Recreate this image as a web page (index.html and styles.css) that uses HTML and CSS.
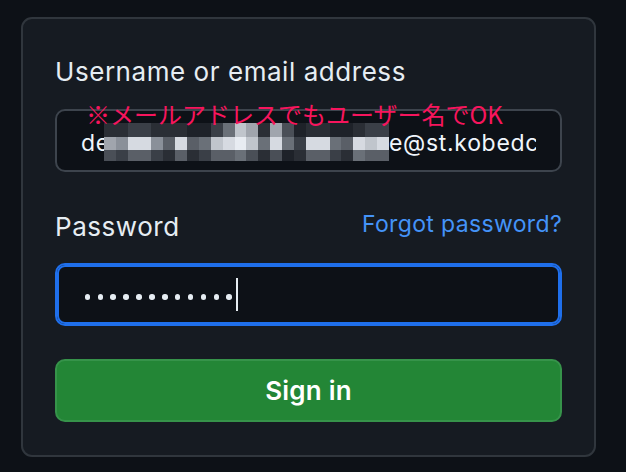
FILE: index.html
```html
<!DOCTYPE html>
<html lang="en">
<head>
<meta charset="utf-8">
<title>Sign in</title>
<link rel="stylesheet" href="styles.css">
</head>
<body>
<div class="card">
  <div class="field">
    <label class="label">Username or email address</label>
    <div class="input">
      <div class="input-inner">
        <span class="value">de</span>
        <div class="mosaic">
          <i class="b"></i><i class="h"></i><i class="d"></i>
          <i class="b"></i><i class="g"></i><i class="c"></i>
          <i class="c"></i><i class="j"></i><i class="e"></i>
          <i class="c"></i><i class="j"></i><i class="e"></i>
          <i class="b"></i><i class="g"></i><i class="c"></i>
          <i class="b"></i><i class="e"></i><i class="b"></i>
          <i class="b"></i><i class="j"></i><i class="e"></i>
          <i class="a"></i><i class="e"></i><i class="b"></i>
          <i class="a"></i><i class="f"></i><i class="c"></i>
          <i class="c"></i><i class="i"></i><i class="e"></i>
          <i class="f"></i><i class="j"></i><i class="e"></i>
          <i class="i"></i><i class="k"></i><i class="f"></i>
          <i class="h"></i><i class="i"></i><i class="d"></i>
          <i class="b"></i><i class="f"></i><i class="b"></i>
          <i class="h"></i><i class="j"></i><i class="d"></i>
          <i class="d"></i><i class="f"></i><i class="a"></i>
          <i class="a"></i><i class="c"></i><i class="b"></i>
          <i class="b"></i><i class="j"></i><i class="e"></i>
          <i class="b"></i><i class="j"></i><i class="e"></i>
          <i class="a"></i><i class="f"></i><i class="c"></i>
          <i class="a"></i><i class="e"></i><i class="b"></i>
          <i class="b"></i><i class="j"></i><i class="f"></i>
          <i class="c"></i><i class="i"></i><i class="e"></i>
          <i class="c"></i><i class="j"></i><i class="e"></i>
        </div>
        <span class="value">e@st.kobedc</span>
      </div>
    </div>
    <div class="note">※メールアドレスでもユーザー名でOK</div>
  </div>

  <div class="field pw">
    <div class="label-row">
      <label class="label">Password</label>
      <a class="link" href="#">Forgot password?</a>
    </div>
    <div class="input focused">
      <div class="input-inner">
        <span class="dot"></span><span class="dot"></span><span class="dot"></span><span class="dot"></span>
        <span class="dot"></span><span class="dot"></span><span class="dot"></span><span class="dot"></span>
        <span class="dot"></span><span class="dot"></span><span class="dot"></span><span class="dot"></span>
        <span class="caret"></span>
      </div>
    </div>
  </div>

  <button class="btn">Sign in</button>
</div>
</body>
</html>
```

FILE: styles.css
```css
* { box-sizing: border-box; }

html, body {
  margin: 0;
  padding: 0;
  background: #0d1117;
}

body {
  font-family: Inter, "Liberation Sans", sans-serif;
  color: #e6edf3;
  padding: 17px 0 0 21px;
  height: 472px;
  overflow: hidden;
}

.card {
  width: 575px;
  background: #161b22;
  border: 2px solid #30363d;
  border-radius: 11px;
  padding: 35px 32px 33px;
  display: flex;
  flex-direction: column;
}

.field {
  position: relative;
  display: flex;
  flex-direction: column;
  gap: 19px;
}

.field.pw {
  margin-top: 37px;
  gap: 18px;
}

.label {
  display: block;
  font-size: 26px;
  line-height: 36px;
  font-weight: 400;
  letter-spacing: 0.55px;
  color: #e6edf3;
}

.label-row {
  display: flex;
  justify-content: space-between;
  align-items: flex-start;
}

.link {
  font-size: 23px;
  line-height: 30px;
  letter-spacing: 0.35px;
  color: #4493f8;
  text-decoration: none;
}

.input {
  height: 63px;
  background: #0d1117;
  border: 2px solid #3d444d;
  border-radius: 10px;
  padding: 0 24px;
  font-size: 23px;
  line-height: 28px;
  color: #f0f6fc;
  white-space: nowrap;
}

.input-inner {
  height: 100%;
  width: 100%;
  padding-top: 4px;
  display: flex;
  align-items: center;
  overflow: hidden;
}

.value {
  flex: none;
  letter-spacing: 0.7px;
}

.mosaic {
  flex: none;
  width: 285px;
  height: 38px;
  margin-left: -6px;
  margin-top: -2px;
  display: grid;
  grid-template-columns: repeat(24, 1fr);
  grid-template-rows: 14px 13px 11px;
  grid-auto-flow: column;
}

.mosaic i { display: block; }
.mosaic .a { background: #1e2229; }
.mosaic .b { background: #2a2e35; }
.mosaic .c { background: #3a3f47; }
.mosaic .d { background: #4a4f57; }
.mosaic .e { background: #5a5f67; }
.mosaic .f { background: #6a7078; }
.mosaic .g { background: #8a9099; }
.mosaic .h { background: #a0a5ad; }
.mosaic .i { background: #c0c5cc; }
.mosaic .j { background: #d6dae1; }
.mosaic .k { background: #e8ecf2; }

.note {
  position: absolute;
  left: 31px;
  top: 48px;
  font-family: "Noto Sans CJK JP", sans-serif;
  font-size: 24px;
  line-height: 24px;
  color: #f7155d;
  white-space: nowrap;
}

.input.focused {
  border-color: #1f6feb;
  box-shadow: inset 0 0 0 2px #1f6feb;
}

.input.focused .input-inner {
  padding-top: 0;
}

.dot {
  flex: none;
  width: 12.9px;
  height: 6px;
  margin-top: 5px;
  display: flex;
  justify-content: center;
  align-items: center;
}

.dot::before {
  content: "";
  width: 5.5px;
  height: 5.5px;
  border-radius: 50%;
  background: #e6edf3;
}

.caret {
  flex: none;
  width: 2px;
  height: 33px;
  background: #e6edf3;
}

.btn {
  margin-top: 33px;
  height: 63px;
  width: 100%;
  background: #238636;
  border: 2px solid #36934a;
  border-radius: 10px;
  color: #ffffff;
  font-family: Inter, "Liberation Sans", sans-serif;
  font-size: 26px;
  font-weight: 600;
  letter-spacing: 0.2px;
  padding: 0;
  cursor: pointer;
}
```
